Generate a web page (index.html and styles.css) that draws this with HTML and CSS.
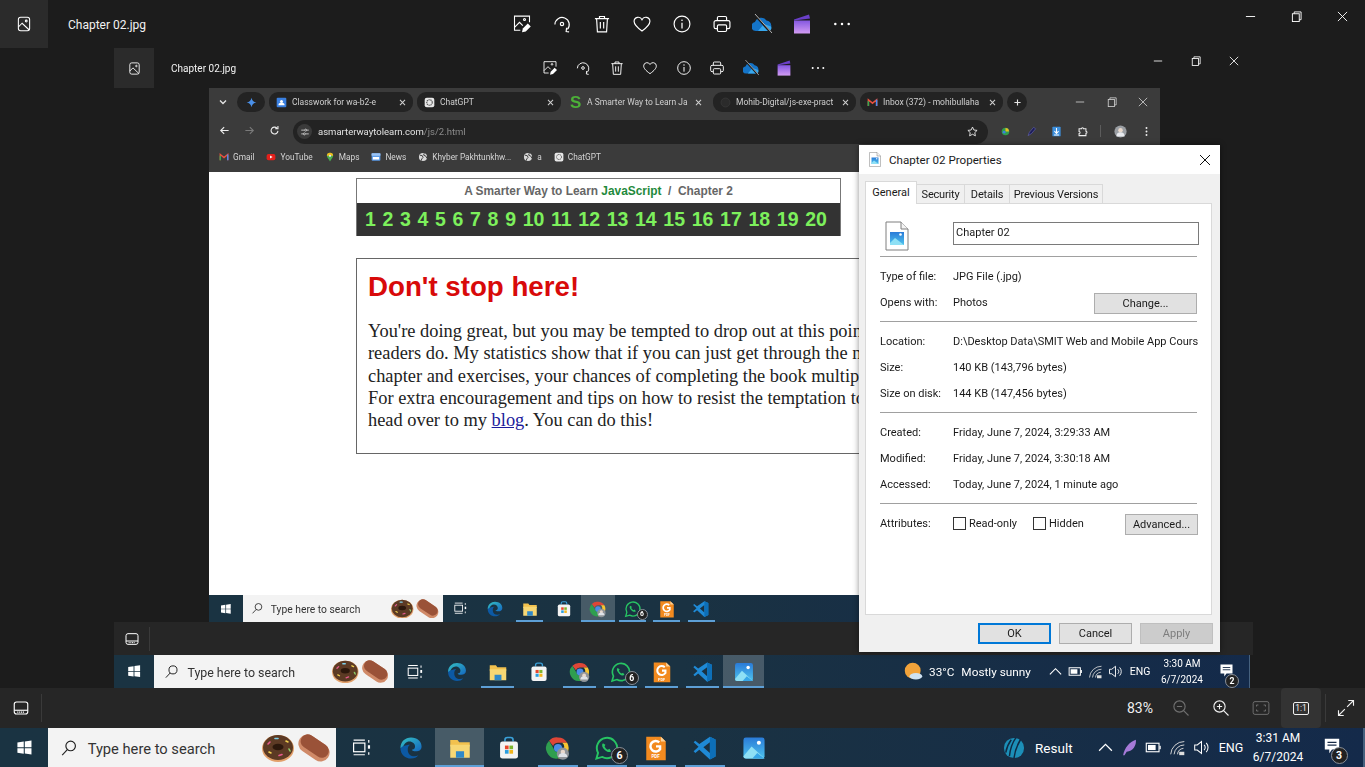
FILE: index.html
```html
<!DOCTYPE html>
<html>
<head>
	<meta charset="UTF-8">
	<title>Chapter 02.jpg</title>
	<link rel="stylesheet" href="styles.css">
</head>
<body>
	<svg class="sprite" xmlns="http://www.w3.org/2000/svg">
		<defs>
			<linearGradient id="g-clap" x1="0" y1="0" x2="0" y2="1"><stop offset="0" stop-color="#8457e0"/><stop offset="1" stop-color="#d29cf2"/></linearGradient>
			<linearGradient id="g-edge" x1="0" y1="0" x2="1" y2="1"><stop offset="0" stop-color="#35c1c4"/><stop offset="1" stop-color="#1467c0"/></linearGradient>
			<linearGradient id="g-photos" x1="0" y1="0" x2="0" y2="1"><stop offset="0" stop-color="#2a7bd8"/><stop offset="1" stop-color="#4ec3ee"/></linearGradient>
		</defs>
		<symbol id="i-tile" viewBox="0 0 24 24"><g fill="none" stroke="currentColor" stroke-width="1.4"><rect x="4.5" y="3" width="15" height="18" rx="3"/><path d="M4.5 16l5-5 9.5 9"/><circle cx="15" cy="8" r="1.2"/></g></symbol>
		<symbol id="i-edit" viewBox="0 0 24 24"><g fill="none" stroke="currentColor" stroke-width="1.3"><path d="M21 10V2.5H3v17h7"/><path d="M3 16l6-6 4 4"/><circle cx="15" cy="6.5" r="1.2"/></g><path d="M12 22l1-4.5 6-6 3.5 3.5-6 6z" fill="currentColor"/></symbol>
		<symbol id="i-rotate" viewBox="0 0 24 24"><g fill="none" stroke="currentColor" stroke-width="1.4"><path d="M3.5 12.5A8.600 8.600 0 1 1 18.500 18.500"/><path d="M17.500 16.500l-.5 4.500 3.500.5"/><circle cx="12" cy="12" r="2"/></g></symbol>
		<symbol id="i-trash" viewBox="0 0 24 24"><path d="M3.5 5.500h17M9 5.500V3h6v2.500M5.500 5.500l1 16h11l1-16M10 9.500v8M14 9.500v8" fill="none" stroke="currentColor" stroke-width="1.4"/></symbol>
		<symbol id="i-heart" viewBox="0 0 24 24"><path d="M12 20.500C5 15.500 2.500 12 2.500 8.800A5 5 0 0 1 12 6.800a5 5 0 0 1 9.500 2c0 3.200-2.500 6.700-9.500 11.700z" fill="none" stroke="currentColor" stroke-width="1.4"/></symbol>
		<symbol id="i-info" viewBox="0 0 24 24"><circle cx="12" cy="12" r="9.500" fill="none" stroke="currentColor" stroke-width="1.4"/><path d="M12 10.500v7" stroke="currentColor" stroke-width="1.5"/><circle cx="12" cy="7.500" r="1" fill="currentColor"/></symbol>
		<symbol id="i-print" viewBox="0 0 24 24"><g fill="none" stroke="currentColor" stroke-width="1.4"><path d="M6.500 8V4.500a1.500 1.500 0 0 1 1.500-1.500h8a1.500 1.500 0 0 1 1.500 1.500V8"/><path d="M6 17.500H4.500A2 2 0 0 1 2.500 15.500V10A2 2 0 0 1 4.500 8h15a2 2 0 0 1 2 2v5.500a2 2 0 0 1-2 2H18"/><rect x="6.500" y="13" width="11" height="8" rx="1.500"/></g></symbol>
		<symbol id="i-cloud" viewBox="2 3 20 20"><path d="M6 20a4.500 4.500 0 0 1-1-8.900A6.500 6.500 0 0 1 16.500 9.500 5.500 5.500 0 0 1 18 20z" fill="#1474c8"/><path d="M8 20l6-7 7 2.500a3 3 0 0 1-3 4.500z" fill="#38a8ee"/><path d="M4 3l18 20" stroke="#1c1c1c" stroke-width="2"/><path d="M5 3l17 19" stroke="#c4c4c4" stroke-width=".9"/></symbol>
		<symbol id="i-clap" viewBox="2 2.500 20 20"><path d="M4 8l15-5 1 4-16 2z" fill="#6a3fc8"/><rect x="4" y="9" width="16" height="13" fill="url(#g-clap)"/></symbol>
		<symbol id="i-dots" viewBox="0 0 24 24"><g fill="currentColor"><circle cx="4" cy="12" r="1.500"/><circle cx="12" cy="12" r="1.500"/><circle cx="20" cy="12" r="1.500"/></g></symbol>
		<symbol id="i-min" viewBox="0 0 12 12"><path d="M1 6h10" stroke="currentColor" stroke-width="1"/></symbol>
		<symbol id="i-restore" viewBox="0 0 12 12"><g fill="none" stroke="currentColor" stroke-width="1"><rect x="1.500" y="3" width="7.500" height="8.500"/><path d="M3.500 3V1h7.500v8.500H9"/></g></symbol>
		<symbol id="i-close" viewBox="0 0 12 12"><path d="M1 1l10 10M11 1L1 11" stroke="currentColor" stroke-width="1"/></symbol>
		<symbol id="i-tablet" viewBox="0 0 24 24"><g fill="none" stroke="currentColor" stroke-width="1.500"><rect x="3" y="4" width="18" height="16" rx="3"/><path d="M3 15h18"/><path d="M7 17.500h10" stroke-dasharray="1.500 1"/></g></symbol>
		<symbol id="i-zoomout" viewBox="0 0 24 24"><g fill="none" stroke="currentColor" stroke-width="1.500"><circle cx="10" cy="10" r="7.500"/><path d="M15.500 15.500l6.500 6.500M6.500 10h7"/></g></symbol>
		<symbol id="i-zoomin" viewBox="0 0 24 24"><g fill="none" stroke="currentColor" stroke-width="1.500"><circle cx="10" cy="10" r="7.500"/><path d="M15.500 15.500l6.500 6.500M6.500 10h7M10 6.500v7"/></g></symbol>
		<symbol id="i-fit" viewBox="0 0 24 24"><g fill="none" stroke="currentColor" stroke-width="1.300"><rect x="1.500" y="3.500" width="21" height="17" rx="2.500"/><path d="M6 10V8h2.500M15.500 8H18v2M18 14v2h-2.500M8.500 16H6v-2"/></g></symbol>
		<symbol id="i-expand" viewBox="0 0 24 24"><path d="M13.500 10.500L22 2M15 2h7v7M10.500 13.500L2 22M2 15v7h7" fill="none" stroke="currentColor" stroke-width="1.500"/></symbol>

		<symbol id="i-win" viewBox="0 0 24 24"><path d="M2 5l9-1.300v8H2zM12.500 3.500L22 2v9.700h-9.500zM2 13h9v8L2 19.700zM12.500 13H22v9l-9.500-1.300z" fill="#fff"/></symbol>
		<symbol id="i-search" viewBox="0 0 24 24"><g fill="none" stroke="#222" stroke-width="1.600"><circle cx="14.500" cy="9.500" r="6.500"/><path d="M10 14.500L3 22"/></g></symbol>
		<symbol id="i-doodle" viewBox="0 0 70 28"><ellipse cx="16" cy="14.500" rx="16" ry="13.500" fill="#e2a06a"/><ellipse cx="16" cy="13.500" rx="15" ry="12.500" fill="#5c3a24"/><ellipse cx="16" cy="13" rx="5.500" ry="3.200" fill="#2c180c"/><g stroke-width="1.600" stroke-linecap="round"><path d="M6 10l2-2" stroke="#e85a8e"/><path d="M13 4.500h3" stroke="#7ed0e8"/><path d="M24 7l2 1" stroke="#f0d050"/><path d="M27 15l1 2" stroke="#8fd06a"/><path d="M7 18l2 1" stroke="#f0d050"/><path d="M17 21.500l3-1" stroke="#e85a8e"/></g><rect x="35" y="5" width="34" height="18" rx="9" transform="rotate(34 52 14)" fill="#d08a68"/><rect x="36" y="5" width="31" height="14" rx="7" transform="rotate(34 52 14)" fill="#9a5238"/></symbol>
		<symbol id="i-taskview" viewBox="0 0 24 24"><g fill="none" stroke="#fff" stroke-width="1.400"><rect x="3" y="7" width="13" height="10"/><path d="M3 3.500h13M3 20.500h13M20.500 3.500v3M20.500 17.500v3"/></g><rect x="19.500" y="9.500" width="2.500" height="4" fill="#fff"/></symbol>
		<symbol id="i-edge" viewBox="0 0 32 32"><path d="M3 16C3 8 9 3 16 3c8 0 13 5 13 11 0 4-3 6-7 6-3 0-5-1-5-2 2 0 4-1 4-4s-3-6-7-6-7 3-8 8z" fill="url(#g-edge)"/><path d="M3 16c0 8 6 13 13 13 4 0 7-1 9-4-6 3-13 0-13-7 0-3 1-5 3-6-6 0-11 3-12 4z" fill="#0c59a4"/></symbol>
		<symbol id="i-files" viewBox="0 0 32 32"><path d="M4 6h9l2 3h13v5H4z" fill="#f2c14e"/><rect x="4" y="12" width="24" height="16" fill="#f7d774"/><rect x="11" y="20" width="10" height="8" fill="#2f88c8"/></symbol>
		<symbol id="i-store" viewBox="0 0 32 32"><path d="M11 8V6a3 3 0 0 1 3-3h4a3 3 0 0 1 3 3v2" fill="none" stroke="#3aa0d8" stroke-width="2"/><rect x="5" y="8" width="22" height="21" rx="3" fill="#f4f4f4"/><rect x="11" y="13" width="4.500" height="4.500" fill="#e8472b"/><rect x="16.500" y="13" width="4.500" height="4.500" fill="#7db62e"/><rect x="11" y="18.500" width="4.500" height="4.500" fill="#2a9ee0"/><rect x="16.500" y="18.500" width="4.500" height="4.500" fill="#f3b51b"/></symbol>
		<symbol id="i-chrome" viewBox="0 0 32 32"><path d="M16 3a13 13 0 0 1 11.300 6.500H16A6.500 6.500 0 0 0 10 13.500L5 7A13 13 0 0 1 16 3z" fill="#de4637"/><path d="M27.300 9.500A13 13 0 0 1 16 29l5.500-9.500a6.500 6.500 0 0 0-.3-10z" fill="#f7c531"/><path d="M5 7l5.500 9.500A6.500 6.500 0 0 0 21.500 19.500L16 29A13 13 0 0 1 5 7z" fill="#2f9e4f"/><circle cx="16" cy="16" r="5" fill="#4a8de8"/><circle cx="22" cy="23" r="7.500" fill="#8f9499"/><circle cx="22" cy="21" r="2.800" fill="#e8d8cc"/><path d="M16.500 27a5.500 5 0 0 1 11 0z" fill="#dfe3e8"/></symbol>
		<symbol id="i-whatsapp" viewBox="0 0 32 32"><path d="M3 29l2-7A12.500 12.500 0 1 1 10 27z" fill="none" stroke="#27c463" stroke-width="2.400"/><path d="M11 10c-2 2-1 5 2 8s6 4 8 2l-2-3-2 1c-2-1-3-2-4-4l1-2z" fill="#27c463"/></symbol>
		<symbol id="i-foxit" viewBox="0 0 32 32"><path d="M4 2h18l6 6v23H4z" fill="#f28a1f"/><path d="M22 2l6 6h-6z" fill="#fbd29a"/><path d="M20 9a6.500 6.500 0 1 0 1 8.500v-3.500h-5" fill="none" stroke="#fff" stroke-width="3"/></symbol>
		<symbol id="i-vscode" viewBox="0 0 32 32"><path d="M22 2l7 3.500v21L22 30 9 18l-5 4-2-2 6-5.500L2 9l2-2 5 4zM22 9l-8 6 8 7z" fill="#1f8ad6"/><path d="M22 2l7 3.500v21L22 30z" fill="#0d6fb8"/></symbol>
		<symbol id="i-photos" viewBox="0 0 32 32"><rect x="3" y="3" width="26" height="26" rx="3" fill="url(#g-photos)"/><circle cx="22" cy="9.500" r="2.500" fill="#fff"/><path d="M3 26l10-12 16 15H6a3 3 0 0 1-3-3z" fill="#8ee0f5"/><path d="M14 29l6-7 9 7z" fill="#37a7e8"/></symbol>

		<symbol id="i-chevup" viewBox="0 0 16 16"><path d="M2 11l6-6 6 6" fill="none" stroke="#fff" stroke-width="1.200"/></symbol>
		<symbol id="i-battery" viewBox="0 0 20 16"><rect x="1.500" y="3" width="15" height="10" fill="none" stroke="#fff" stroke-width="1.300"/><rect x="3.500" y="5" width="9" height="6" fill="#fff"/><rect x="17" y="6" width="1.500" height="4" fill="#fff"/></symbol>
		<symbol id="i-wifi" viewBox="0 0 20 20"><g fill="none" stroke="#ddd" stroke-width="1.100"><path d="M2 18A16 16 0 0 1 18 3"/><path d="M6 18A12 12 0 0 1 18 7"/><path d="M10 18a8 8 0 0 1 7-7"/></g><path d="M12 15h6v4h-6z" fill="#ddd"/></symbol>
		<symbol id="i-speaker" viewBox="0 0 20 20"><g fill="none" stroke="#fff" stroke-width="1.200"><path d="M2 7h3l5-4v14l-5-4H2z"/><path d="M13 7a4 4 0 0 1 0 6M15.500 4.500a8 8 0 0 1 0 11"/></g></symbol>
		<symbol id="i-note" viewBox="0 0 20 20"><path d="M2 2h16v12h-8l-3 4v-4H2z" fill="#fff"/><path d="M5 6h10M5 9h10" stroke="#1a2c48" stroke-width="1.200"/></symbol>
		<symbol id="i-sun" viewBox="0 0 24 24"><circle cx="11" cy="11" r="10" fill="#f2a33a"/><ellipse cx="15" cy="18" rx="8" ry="4" fill="#cfe2f3"/></symbol>
		<symbol id="i-result" viewBox="0 0 24 24"><circle cx="12" cy="12" r="11" fill="#1c8fb8"/><path d="M7 21C8 12 11 5 14 1M12 23c1-8 4-15 7-20M3 17c1-6 3-10 6-14" stroke="#0f2a44" stroke-width="1.600" fill="none"/></symbol>
		<symbol id="i-feather" viewBox="0 0 24 24"><path d="M3 23C5 12 12 4 21 1c1 8-4 16-13 17l-3 5z" fill="#a67ad8"/></symbol>

		<symbol id="i-gpt" viewBox="0 0 16 16"><rect x="1" y="1" width="14" height="14" rx="3" fill="#e8e8e8"/><circle cx="8" cy="8" r="4" fill="none" stroke="#555" stroke-width="1.600" stroke-dasharray="2 .8"/></symbol>
		<symbol id="i-classroom" viewBox="0 0 16 16"><rect x="1" y="1" width="14" height="14" rx="1.500" fill="#3a7fe0"/><circle cx="8" cy="6.500" r="2.200" fill="#fff"/><path d="M3.500 12a4.500 3.500 0 0 1 9 0z" fill="#fff"/></symbol>
		<symbol id="i-gemini" viewBox="0 0 16 16"><path d="M8 1c.6 4 3 6.400 7 7-4 .6-6.400 3-7 7-.6-4-3-6.400-7-7 4-.6 6.400-3 7-7z" fill="#4a90e8"/></symbol>
		<symbol id="i-gmail" viewBox="0 0 16 16"><path d="M2 13V4l6 5 6-5v9" fill="none" stroke="#e8503f" stroke-width="2.200"/><path d="M14 4v9" stroke="#4c8bf0" stroke-width="2.200"/><path d="M2 13V6" stroke="#34a853" stroke-width="2.200"/></symbol>
		<symbol id="i-github" viewBox="0 0 16 16"><circle cx="8" cy="8" r="6.500" fill="#2b2b2b" stroke="#3a3a3a"/></symbol>
		<symbol id="i-youtube" viewBox="0 0 16 16"><rect x="1" y="3" width="14" height="10" rx="3" fill="#e3201b"/><path d="M6.500 5.500v5l4-2.500z" fill="#fff"/></symbol>
		<symbol id="i-maps" viewBox="0 0 16 16"><path d="M8 1a5 5 0 0 1 5 5c0 3-3 5-5 9-2-4-5-6-5-9a5 5 0 0 1 5-5z" fill="#4caf50"/><path d="M8 1a5 5 0 0 1 5 5H3a5 5 0 0 1 5-5z" fill="#f2b91d"/><circle cx="8" cy="6" r="1.800" fill="#e8e8e8"/></symbol>
		<symbol id="i-news" viewBox="0 0 16 16"><rect x="1" y="2" width="14" height="12" rx="1.500" fill="#5b9be8"/><rect x="1" y="2" width="14" height="4" fill="#9cc3f2"/><rect x="3" y="8" width="10" height="4" fill="#fff"/></symbol>
		<symbol id="i-globe" viewBox="0 0 16 16"><circle cx="8" cy="8" r="6.500" fill="#d8d8d8"/><path d="M3 5l4 1 1 3-2 2-1 3M10 2l-1 3 4 2 1 3" fill="none" stroke="#3a3a3a" stroke-width="1.500"/></symbol>
		<symbol id="i-ext1" viewBox="0 0 16 16"><circle cx="8" cy="8" r="5.500" fill="#2f9e4f"/><path d="M8 3a5 5 0 0 1 5 5H8z" fill="#e8c020"/><circle cx="6" cy="9" r="2" fill="#3a7fe0"/></symbol>
		<symbol id="i-ext2" viewBox="0 0 16 16"><path d="M3 14l2-5 6-7 3 2-6 7z" fill="#1c1c58" stroke="#6a6ac0" stroke-width=".8"/></symbol>
		<symbol id="i-ext3" viewBox="0 0 16 16"><rect x="2" y="1" width="12" height="14" rx="1" fill="#3d8fdc"/><path d="M8 3v7M5 7.500l3 3.500 3-3.500M4.500 13h7" fill="none" stroke="#fff" stroke-width="1.500"/></symbol>
		<symbol id="i-puzzle" viewBox="0 0 16 16"><path d="M3 4h3.500a1.500 1.500 0 0 1 3 0H13v3.500a1.500 1.500 0 0 1 0 3V14H3v-3a1.500 1.500 0 0 0 0-3z" fill="none" stroke="#eee" stroke-width="1.500"/></symbol>
		<symbol id="i-avatar" viewBox="0 0 16 16"><circle cx="8" cy="8" r="7.500" fill="#9a9ea3"/><circle cx="8" cy="6.500" r="2.800" fill="#e8d8cc"/><path d="M3 14a5 5 0 0 1 10 0z" fill="#e8eaee"/></symbol>
		<symbol id="i-star" viewBox="0 0 16 16"><path d="M8 1.500l2 4.300 4.700.6-3.400 3.200.9 4.700L8 12l-4.200 2.300.9-4.700L1.300 6.400 6 5.800z" fill="none" stroke="#eee" stroke-width="1.300"/></symbol>
		<symbol id="i-tune" viewBox="0 0 16 16"><g stroke="#ddd" stroke-width="1.300" fill="none"><path d="M2 5h5M11 5h3M2 11h3M9 11h5"/><circle cx="9" cy="5" r="1.600"/><circle cx="7" cy="11" r="1.600"/></g></symbol>
		<symbol id="i-back" viewBox="0 0 16 16"><path d="M14 8H2.500M7.500 3L2.500 8l5 5" fill="none" stroke="currentColor" stroke-width="1.600"/></symbol>
		<symbol id="i-forward" viewBox="0 0 16 16"><path d="M2 8h11.500M8.500 3l5 5-5 5" fill="none" stroke="currentColor" stroke-width="1.600"/></symbol>
		<symbol id="i-reload" viewBox="0 0 16 16"><path d="M13 8.500A5 5 0 1 1 11.500 4.500M13 1.500v4H9" fill="none" stroke="currentColor" stroke-width="1.600"/></symbol>
		<symbol id="i-kebab" viewBox="0 0 16 16"><g fill="currentColor"><circle cx="8" cy="3" r="1.400"/><circle cx="8" cy="8" r="1.400"/><circle cx="8" cy="13" r="1.400"/></g></symbol>
		<symbol id="i-chevdown" viewBox="0 0 16 16"><path d="M4 6l4 4 4-4" fill="none" stroke="currentColor" stroke-width="1.800"/></symbol>
		<symbol id="i-x" viewBox="0 0 16 16"><path d="M3.500 3.500l9 9M12.500 3.500l-9 9" stroke="currentColor" stroke-width="1.800"/></symbol>
		<symbol id="i-plus" viewBox="0 0 16 16"><path d="M8 2.500v11M2.500 8h11" stroke="currentColor" stroke-width="2"/></symbol>
		<symbol id="i-file" viewBox="0 0 24 30"><path d="M1 1h15l7 7v21H1z" fill="#fff" stroke="#7f7f7f"/><path d="M16 1v7h7" fill="#f4f4f4" stroke="#7f7f7f"/><rect x="5" y="11" width="14" height="13" fill="url(#g-photos)"/><path d="M5 22l5-5 9 7H5z" fill="#8ee0f5"/><circle cx="15.500" cy="13.500" r="1.300" fill="#fff"/></symbol>
	</svg>

	<header class="top-bar">
		<div class="tile"><svg class="ico"><use href="#i-tile"/></svg></div>
		<div class="file-name">Chapter 02.jpg</div>
		<div class="tools">
			<span class="tool"><svg class="ico"><use href="#i-edit"/></svg></span>
			<span class="tool"><svg class="ico"><use href="#i-rotate"/></svg></span>
			<span class="tool"><svg class="ico"><use href="#i-trash"/></svg></span>
			<span class="tool"><svg class="ico"><use href="#i-heart"/></svg></span>
			<span class="tool"><svg class="ico"><use href="#i-info"/></svg></span>
			<span class="tool"><svg class="ico"><use href="#i-print"/></svg></span>
			<span class="tool"><svg class="ico"><use href="#i-cloud"/></svg></span>
			<span class="tool"><svg class="ico"><use href="#i-clap"/></svg></span>
			<span class="tool"><svg class="ico"><use href="#i-dots"/></svg></span>
		</div>
		<div class="win-btns">
			<span class="win-btn"><svg class="win-ico"><use href="#i-min"/></svg></span>
			<span class="win-btn"><svg class="win-ico"><use href="#i-restore"/></svg></span>
			<span class="win-btn"><svg class="win-ico"><use href="#i-close"/></svg></span>
		</div>
	</header>

	<main class="stage">
		<div class="inner">
			<header class="top-bar">
				<div class="tile"><svg class="ico"><use href="#i-tile"/></svg></div>
				<div class="file-name">Chapter 02.jpg</div>
				<div class="tools">
					<span class="tool"><svg class="ico"><use href="#i-edit"/></svg></span>
					<span class="tool"><svg class="ico"><use href="#i-rotate"/></svg></span>
					<span class="tool"><svg class="ico"><use href="#i-trash"/></svg></span>
					<span class="tool"><svg class="ico"><use href="#i-heart"/></svg></span>
					<span class="tool"><svg class="ico"><use href="#i-info"/></svg></span>
					<span class="tool"><svg class="ico"><use href="#i-print"/></svg></span>
					<span class="tool"><svg class="ico"><use href="#i-cloud"/></svg></span>
					<span class="tool"><svg class="ico"><use href="#i-clap"/></svg></span>
					<span class="tool"><svg class="ico"><use href="#i-dots"/></svg></span>
				</div>
				<div class="win-btns">
					<span class="win-btn"><svg class="win-ico"><use href="#i-min"/></svg></span>
					<span class="win-btn"><svg class="win-ico"><use href="#i-restore"/></svg></span>
					<span class="win-btn"><svg class="win-ico"><use href="#i-close"/></svg></span>
				</div>
			</header>

			<div class="browser">
				<div class="tab-strip">
					<svg class="strip-ico tab-chev"><use href="#i-chevdown"/></svg>
					<span class="gem-pill"><svg class="fav"><use href="#i-gemini"/></svg></span>
					<div class="tab pill t1"><svg class="fav"><use href="#i-classroom"/></svg><span class="tab-text">Classwork for wa-b2-e</span><svg class="tab-x"><use href="#i-x"/></svg></div>
					<div class="tab pill t2"><svg class="fav"><use href="#i-gpt"/></svg><span class="tab-text">ChatGPT</span><svg class="tab-x"><use href="#i-x"/></svg></div>
					<div class="tab t3"><span class="fav-s">S</span><span class="tab-text">A Smarter Way to Learn Ja</span><svg class="tab-x"><use href="#i-x"/></svg></div>
					<div class="tab pill t4"><svg class="fav"><use href="#i-github"/></svg><span class="tab-text">Mohib-Digital/js-exe-pract</span><svg class="tab-x"><use href="#i-x"/></svg></div>
					<div class="tab pill t5"><svg class="fav"><use href="#i-gmail"/></svg><span class="tab-text">Inbox (372) - mohibullaha</span><svg class="tab-x"><use href="#i-x"/></svg></div>
					<span class="new-tab"><svg class="strip-ico"><use href="#i-plus"/></svg></span>
					<div class="chrome-btns">
						<svg class="win-ico"><use href="#i-min"/></svg>
						<svg class="win-ico"><use href="#i-restore"/></svg>
						<svg class="win-ico"><use href="#i-close"/></svg>
					</div>
				</div>
				<div class="nav-bar">
					<span class="nav-btn"><svg class="strip-ico"><use href="#i-back"/></svg></span>
					<span class="nav-btn dim"><svg class="strip-ico"><use href="#i-forward"/></svg></span>
					<span class="nav-btn"><svg class="strip-ico"><use href="#i-reload"/></svg></span>
					<div class="omnibox">
						<span class="tune"><svg class="fav"><use href="#i-tune"/></svg></span>
						<span class="url">asmarterwaytolearn.com<span class="url-dim">/js/2.html</span></span>
						<svg class="fav star"><use href="#i-star"/></svg>
					</div>
					<div class="ext-row">
						<svg class="fav"><use href="#i-ext1"/></svg>
						<svg class="fav"><use href="#i-ext2"/></svg>
						<svg class="fav"><use href="#i-ext3"/></svg>
						<svg class="fav"><use href="#i-puzzle"/></svg>
						<span class="ext-sep"></span>
						<svg class="fav avatar"><use href="#i-avatar"/></svg>
						<svg class="fav kebab"><use href="#i-kebab"/></svg>
					</div>
				</div>
				<div class="bookmarks">
					<span class="bm"><svg class="fav"><use href="#i-gmail"/></svg>Gmail</span>
					<span class="bm"><svg class="fav"><use href="#i-youtube"/></svg>YouTube</span>
					<span class="bm"><svg class="fav"><use href="#i-maps"/></svg>Maps</span>
					<span class="bm"><svg class="fav"><use href="#i-news"/></svg>News</span>
					<span class="bm"><svg class="fav"><use href="#i-globe"/></svg>Khyber Pakhtunkhw...</span>
					<span class="bm"><svg class="fav"><use href="#i-globe"/></svg>a</span>
					<span class="bm"><svg class="fav"><use href="#i-gpt"/></svg>ChatGPT</span>
				</div>
				<div class="page">
					<div class="chapter-nav">
						<div class="chapter-title">A Smarter Way to Learn <span class="js">JavaScript</span>&nbsp; / &nbsp;Chapter 2</div>
						<div class="chapter-nums">
							<span>1</span><span>2</span><span>3</span><span>4</span><span>5</span><span>6</span><span>7</span><span>8</span><span>9</span><span>10</span><span>11</span><span>12</span><span>13</span><span>14</span><span>15</span><span>16</span><span>17</span><span>18</span><span>19</span><span>20</span>
						</div>
					</div>
					<div class="callout">
						<h1>Don't stop here!</h1>
						<p>You're doing great, but you may be tempted to drop out at this point<br>
						readers do. My statistics show that if you can just get through the n<br>
						chapter and exercises, your chances of completing the book multiply<br>
						For extra encouragement and tips on how to resist the temptation to<br>
						head over to my <a href="#">blog</a>. You can do this!</p>
					</div>
				</div>
				<div class="taskbar tb-sm">
					<span class="start"><svg class="start-ico"><use href="#i-win"/></svg></span>
					<div class="search"><svg class="search-ico"><use href="#i-search"/></svg><span class="search-text">Type here to search</span><svg class="doodle"><use href="#i-doodle"/></svg></div>
					<span class="cell first"><svg class="app tv"><use href="#i-taskview"/></svg></span>
					<span class="cell"><svg class="app"><use href="#i-edge"/></svg></span>
					<span class="cell run"><svg class="app"><use href="#i-files"/></svg></span>
					<span class="cell"><svg class="app"><use href="#i-store"/></svg></span>
					<span class="cell run active"><svg class="app"><use href="#i-chrome"/></svg></span>
					<span class="cell run"><svg class="app"><use href="#i-whatsapp"/></svg><b class="badge">6</b></span>
					<span class="cell run"><svg class="app"><use href="#i-foxit"/></svg><b class="pdf">PDF</b></span>
					<span class="cell run"><svg class="app"><use href="#i-vscode"/></svg></span>
				</div>
			</div>

			<div class="bottom-bar">
				<span class="tablet"><svg class="ico"><use href="#i-tablet"/></svg></span>
			</div>

			<div class="taskbar tb-md">
				<span class="start"><svg class="start-ico"><use href="#i-win"/></svg></span>
				<div class="search"><svg class="search-ico"><use href="#i-search"/></svg><span class="search-text">Type here to search</span><svg class="doodle"><use href="#i-doodle"/></svg></div>
				<span class="cell first"><svg class="app tv"><use href="#i-taskview"/></svg></span>
				<span class="cell"><svg class="app"><use href="#i-edge"/></svg></span>
				<span class="cell run"><svg class="app"><use href="#i-files"/></svg></span>
				<span class="cell"><svg class="app"><use href="#i-store"/></svg></span>
				<span class="cell run"><svg class="app"><use href="#i-chrome"/></svg></span>
				<span class="cell run"><svg class="app"><use href="#i-whatsapp"/></svg><b class="badge">6</b></span>
				<span class="cell run"><svg class="app"><use href="#i-foxit"/></svg><b class="pdf">PDF</b></span>
				<span class="cell run"><svg class="app"><use href="#i-vscode"/></svg></span>
				<span class="cell run active"><svg class="app"><use href="#i-photos"/></svg></span>
				<div class="tray">
					<svg class="tray-news"><use href="#i-sun"/></svg>
					<span class="tray-label"><span class="temp">33°C</span>Mostly sunny</span>
					<span class="tray-cell"><svg class="tray-ico"><use href="#i-chevup"/></svg></span>
					<span class="tray-cell"><svg class="tray-ico"><use href="#i-battery"/></svg></span>
					<span class="tray-cell"><svg class="tray-ico"><use href="#i-wifi"/></svg></span>
					<span class="tray-cell"><svg class="tray-ico"><use href="#i-speaker"/></svg></span>
					<span class="tray-lang">ENG</span>
					<span class="clock">3:30 AM<br>6/7/2024</span>
					<span class="notif"><svg class="note"><use href="#i-note"/></svg><b class="badge">2</b></span>
				</div>
			</div>
		</div>
	</main>

	<div class="bottom-bar main-bottom">
		<span class="tablet"><svg class="ico"><use href="#i-tablet"/></svg></span>
		<span class="zoom-pct">83%</span>
		<span class="bb-btn dim"><svg class="ico"><use href="#i-zoomout"/></svg></span>
		<span class="bb-btn"><svg class="ico"><use href="#i-zoomin"/></svg></span>
		<span class="bb-btn dim"><svg class="ico"><use href="#i-fit"/></svg></span>
		<span class="bb-btn on"><span class="actual">1:1</span></span>
		<span class="bb-sep"></span>
		<span class="bb-btn last"><svg class="ico"><use href="#i-expand"/></svg></span>
	</div>

	<div class="taskbar tb-lg">
		<span class="start"><svg class="start-ico"><use href="#i-win"/></svg></span>
		<div class="search"><svg class="search-ico"><use href="#i-search"/></svg><span class="search-text">Type here to search</span><svg class="doodle"><use href="#i-doodle"/></svg></div>
		<span class="cell first"><svg class="app tv"><use href="#i-taskview"/></svg></span>
		<span class="cell"><svg class="app"><use href="#i-edge"/></svg></span>
		<span class="cell run active"><svg class="app"><use href="#i-files"/></svg></span>
		<span class="cell"><svg class="app"><use href="#i-store"/></svg></span>
		<span class="cell run"><svg class="app"><use href="#i-chrome"/></svg></span>
		<span class="cell run"><svg class="app"><use href="#i-whatsapp"/></svg><b class="badge">6</b></span>
		<span class="cell run"><svg class="app"><use href="#i-foxit"/></svg><b class="pdf">PDF</b></span>
		<span class="cell run"><svg class="app"><use href="#i-vscode"/></svg></span>
		<span class="cell"><svg class="app"><use href="#i-photos"/></svg></span>
		<div class="tray">
			<svg class="tray-news"><use href="#i-result"/></svg>
			<span class="tray-label">Result</span>
			<span class="tray-cell"><svg class="tray-ico"><use href="#i-chevup"/></svg></span>
			<span class="tray-cell"><svg class="tray-ico"><use href="#i-feather"/></svg></span>
			<span class="tray-cell"><svg class="tray-ico"><use href="#i-battery"/></svg></span>
			<span class="tray-cell"><svg class="tray-ico"><use href="#i-wifi"/></svg></span>
			<span class="tray-cell"><svg class="tray-ico"><use href="#i-speaker"/></svg></span>
			<span class="tray-lang">ENG</span>
			<span class="clock">3:31 AM<br>6/7/2024</span>
			<span class="notif"><svg class="note"><use href="#i-note"/></svg><b class="badge">3</b></span>
		</div>
	</div>

	<section class="props">
		<div class="props-title">
			<svg class="props-fav"><use href="#i-file"/></svg>
			<span class="props-name">Chapter 02 Properties</span>
			<svg class="props-close"><use href="#i-close"/></svg>
		</div>
		<div class="props-body">
			<div class="props-tabs">
				<span class="ptab current">General</span>
				<span class="ptab sec">Security</span>
				<span class="ptab det">Details</span>
				<span class="ptab prev">Previous Versions</span>
			</div>
			<div class="props-panel">
				<div class="head-row">
					<svg class="big-file"><use href="#i-file"/></svg>
					<div class="name-input">Chapter 02</div>
				</div>
				<hr class="sep">
				<div class="row"><span class="lbl">Type of file:</span><span class="val">JPG File (.jpg)</span></div>
				<div class="row"><span class="lbl">Opens with:</span><span class="val">Photos</span><span class="btn change">Change...</span></div>
				<hr class="sep">
				<div class="row"><span class="lbl">Location:</span><span class="val">D:\Desktop Data\SMIT Web and Mobile App Cours</span></div>
				<div class="row"><span class="lbl">Size:</span><span class="val">140 KB (143,796 bytes)</span></div>
				<div class="row"><span class="lbl">Size on disk:</span><span class="val">144 KB (147,456 bytes)</span></div>
				<hr class="sep">
				<div class="row"><span class="lbl">Created:</span><span class="val">Friday, June 7, 2024, 3:29:33 AM</span></div>
				<div class="row"><span class="lbl">Modified:</span><span class="val">Friday, June 7, 2024, 3:30:18 AM</span></div>
				<div class="row"><span class="lbl">Accessed:</span><span class="val">Today, June 7, 2024, 1 minute ago</span></div>
				<hr class="sep">
				<div class="row">
					<span class="lbl">Attributes:</span>
					<span class="check"><i class="box"></i>Read-only</span>
					<span class="check"><i class="box"></i>Hidden</span>
					<span class="btn advanced">Advanced...</span>
				</div>
			</div>
			<div class="props-actions">
				<span class="btn dlg default">OK</span>
				<span class="btn dlg">Cancel</span>
				<span class="btn dlg disabled">Apply</span>
			</div>
		</div>
	</section>
</body>
</html>
```

FILE: styles.css
```css
* {
	box-sizing: border-box;
}

html, body {
	margin: 0;
	padding: 0;
}

body {
	position: relative;
	width: 1365px;
	height: 767px;
	overflow: hidden;
	background-color: #1c1c1c;
	color: #fff;
	font-family: Roboto, "Liberation Sans", sans-serif;
}

svg {
	display: block;
	flex: none;
}

.sprite {
	position: absolute;
	width: 0;
	height: 0;
}

/* viewer header */
.top-bar {
	display: flex;
	align-items: center;
	height: 48px;
	color: #fff;
}

.tile {
	display: flex;
	align-items: center;
	justify-content: center;
	width: 48px;
	height: 48px;
	background-color: #2b2b2b;
}

.tile .ico {
	width: 18px;
	height: 18px;
}

.file-name {
	width: 454px;
	padding-top: 2px;
	padding-left: 20px;
	font-size: 12px;
	color: #f2f2f2;
}

.tools {
	display: flex;
}

.tool {
	display: flex;
	align-items: center;
	justify-content: center;
	width: 40px;
	height: 40px;
}

.tool .ico {
	width: 20px;
	height: 20px;
}

.win-btns {
	display: flex;
	margin-left: auto;
}

.win-btn {
	display: flex;
	align-items: center;
	justify-content: center;
	width: 46px;
	height: 32px;
	margin-top: -16px;
}

.win-ico {
	width: 11px;
	height: 11px;
}

.stage {
	height: 640px;
	padding-left: 114px;
}

.inner {
	width: 1139px;
	height: 640px;
	filter: blur(0.3px);
}

.inner .top-bar {
	height: 40px;
}

.inner .tile {
	width: 40px;
	height: 40px;
}

.inner .tile .ico {
	width: 15px;
	height: 15px;
}

.inner .file-name {
	width: 379px;
	padding-top: 0;
	padding-left: 17px;
	font-size: 10px;
}

.inner .tool {
	width: 33.5px;
	height: 40px;
}

.inner .tool .ico {
	width: 16px;
	height: 16px;
}

.inner .win-btn {
	width: 38px;
	height: 26px;
	margin-top: -14px;
}

.inner .win-ico {
	width: 10px;
	height: 10px;
}

/* browser shot */
.browser {
	display: flex;
	flex-direction: column;
	width: 951px;
	height: 534px;
	margin-left: 95px;
	background-color: #3b3b3b;
}

.tab-strip {
	display: flex;
	align-items: center;
	height: 28px;
	color: #e4e4e4;
}

.strip-ico {
	width: 12px;
	height: 12px;
}

.tab-chev {
	margin-left: 8px;
	margin-right: 8px;
}

.gem-pill {
	display: flex;
	align-items: center;
	justify-content: center;
	width: 28px;
	height: 20px;
	border-radius: 10px;
	background-color: #232323;
}

.fav {
	width: 11px;
	height: 11px;
}

.tab {
	display: flex;
	align-items: center;
	height: 20px;
	padding: 0 6px 0 7px;
	border-radius: 9px;
	font-size: 8.5px;
	color: #cfcfcf;
	white-space: nowrap;
}

.tab.pill {
	background-color: #232323;
}

.t1 {
	width: 144px;
	margin-left: 4px;
	margin-right: 4px;
}

.t2 {
	width: 144px;
}

.t3 {
	width: 148px;
	padding-left: 9px;
}

.t4 {
	width: 143px;
	margin-left: 4px;
	margin-right: 4px;
}

.t5 {
	width: 143px;
}

.tab-text {
	flex: 1;
	min-width: 0;
	margin-left: 5px;
	overflow: hidden;
}

.fav-s {
	width: 12px;
	font-family: "Liberation Sans", sans-serif;
	font-size: 17px;
	font-weight: 700;
	line-height: 17px;
	color: #4caf38;
}

.tab-x {
	width: 9px;
	height: 9px;
	margin-left: 3px;
	color: #d0d0d0;
}

.new-tab {
	display: flex;
	align-items: center;
	justify-content: center;
	width: 20px;
	height: 20px;
	margin-left: 4px;
	border-radius: 50%;
	background-color: #232323;
}

.new-tab .strip-ico {
	width: 9px;
	height: 9px;
}

.chrome-btns {
	display: flex;
	gap: 21.5px;
	margin-left: 48px;
	color: #cfcfcf;
}

.chrome-btns .win-ico {
	width: 10px;
	height: 10px;
}

.nav-bar {
	display: flex;
	align-items: center;
	height: 28px;
	padding-left: 3px;
	color: #eee;
}

.nav-btn {
	display: flex;
	align-items: center;
	justify-content: center;
	width: 25px;
}

.nav-btn .strip-ico {
	width: 11px;
	height: 11px;
}

.nav-btn.dim {
	color: #7a7a7a;
}

.omnibox {
	display: flex;
	align-items: center;
	width: 695px;
	height: 24px;
	margin-left: 6px;
	margin-top: 3px;
	padding-left: 4px;
	border-radius: 12px;
	background-color: #232323;
}

.tune {
	display: flex;
	align-items: center;
	justify-content: center;
	width: 15px;
	height: 15px;
	border-radius: 50%;
	background-color: #3a3a3a;
}

.tune .fav {
	width: 10px;
	height: 10px;
}

.url {
	margin-left: 6px;
	font-size: 9.5px;
	color: #e2e2e2;
}

.url-dim {
	color: #8a8a8a;
}

.star {
	margin-left: auto;
	margin-right: 10px;
}

.ext-row {
	display: flex;
	align-items: center;
	gap: 14.5px;
	margin-left: 12px;
	margin-top: 2px;
}

.ext-sep {
	width: 1px;
	height: 12px;
	margin: 0 -2px;
	background-color: #5c5c5c;
}

.avatar {
	width: 13px;
	height: 13px;
}

.kebab {
	color: #eee;
}

.bookmarks {
	display: flex;
	align-items: center;
	gap: 12px;
	height: 28px;
	padding-left: 10px;
	padding-bottom: 2px;
	font-size: 8.3px;
	color: #d4d4d4;
}

.bm {
	display: flex;
	align-items: center;
	gap: 4px;
	white-space: nowrap;
}

.bm .fav {
	width: 10px;
	height: 10px;
}

.page {
	position: relative;
	flex: 1;
	height: 423px;
	padding: 6px 0 0 147px;
	background-color: #fff;
	color: #222;
}

.chapter-nav {
	width: 485px;
	height: 58px;
	border: 1px solid #777;
	font-family: "Liberation Sans", sans-serif;
}

.chapter-title {
	height: 24px;
	font-size: 11.9px;
	font-weight: 700;
	line-height: 24px;
	text-align: center;
	color: #666;
}

.js {
	color: #1f8a3c;
}

.chapter-nums {
	display: flex;
	align-items: center;
	justify-content: space-between;
	height: 33px;
	padding: 0 13px 0 8px;
	background-color: #333;
	font-size: 19.5px;
	font-weight: 700;
	color: #7df05c;
}

.callout {
	width: 640px;
	height: 196px;
	margin-top: 22px;
	padding: 11px 11px 0;
	border: 1px solid #666;
}

.callout h1 {
	margin: 0;
	font-family: "Liberation Sans", sans-serif;
	font-size: 27.7px;
	font-weight: 700;
	line-height: 34px;
	color: #d80a0a;
}

.callout p {
	margin: 16px 0 0;
	font-family: "Liberation Serif", serif;
	font-size: 18.4px;
	line-height: 22.3px;
	white-space: nowrap;
	color: #222;
}

.callout a {
	color: #1c1c9c;
}

/* strip under the picture */
.bottom-bar {
	display: flex;
	align-items: center;
	height: 33px;
	background-color: #262626;
}

.tablet {
	display: flex;
	align-items: center;
	justify-content: center;
	width: 36px;
	height: 24px;
	border-right: 1px solid #3a3a3a;
}

.tablet .ico {
	width: 16px;
	height: 16px;
}

.main-bottom {
	height: 40px;
}

.main-bottom .tablet {
	width: 42px;
	height: 28px;
}

.main-bottom .tablet .ico {
	width: 18px;
	height: 18px;
}

.zoom-pct {
	margin-left: auto;
	width: 34px;
	font-size: 14px;
	color: #f0f0f0;
}

.bb-btn {
	display: flex;
	align-items: center;
	justify-content: center;
	width: 40px;
	height: 40px;
	color: #f0f0f0;
}

.bb-btn .ico {
	width: 18px;
	height: 18px;
}

.bb-btn.dim {
	color: #6f6f6f;
}

.bb-btn.on {
	border-radius: 4px;
	background-color: #333;
}

.bb-btn.last {
	margin-right: -1px;
}

.actual {
	display: flex;
	align-items: center;
	justify-content: center;
	width: 16px;
	height: 13px;
	border: 1px solid #f0f0f0;
	border-radius: 2px;
	font-size: 8.5px;
}

.bb-sep {
	width: 1px;
	height: 28px;
	margin-left: 4px;
	background-color: #3a3a3a;
}

/* windows taskbar, three sizes */
.taskbar {
	display: flex;
	align-items: stretch;
	height: var(--bar);
	background: linear-gradient(90deg, #1a3342 0%, #1a3242 50%, #142a4a 100%);
}

.tb-lg {
	--bar: 39px;
	--start: 48px;
	--search: 288px;
	--cell: 49px;
	--app: 26px;
	--font: 14.7px;
	--run: 40px;
	--badge: 17px;
	--doodle: 70px;
	border-right: 2px solid #46617e;
	box-shadow: inset -2px 0 0 #142a4a;
}

.tb-md {
	--bar: 33px;
	--start: 40px;
	--search: 240px;
	--cell: 41px;
	--app: 22px;
	--font: 12.4px;
	--run: 33px;
	--badge: 14px;
	--doodle: 58px;
	width: 1136px;
	border-right: 1px solid #46617e;
}

.tb-sm {
	--bar: 27px;
	--start: 34px;
	--search: 200px;
	--cell: 34.3px;
	--app: 18px;
	--font: 10.3px;
	--run: 27px;
	--badge: 11px;
	--doodle: 49px;
	flex: none;
}

.start {
	display: flex;
	align-items: center;
	justify-content: center;
	width: var(--start);
}

.start-ico {
	width: calc(var(--app) * 0.65);
	height: calc(var(--app) * 0.65);
}

.search {
	display: flex;
	align-items: center;
	width: var(--search);
	background-color: #f3f3f3;
	color: #333;
	font-size: var(--font);
}

.search-ico {
	width: calc(var(--font) * 1.2);
	height: calc(var(--font) * 1.2);
	margin-left: calc(var(--font) * 0.8);
}

.search-text {
	margin-top: 2px;
	margin-left: calc(var(--font) * 0.7);
	white-space: nowrap;
}

.doodle {
	width: var(--doodle);
	height: calc(var(--doodle) * 0.4);
	margin-left: auto;
	margin-right: calc(var(--font) * 0.3);
}

.cell {
	position: relative;
	display: flex;
	align-items: center;
	justify-content: center;
	width: var(--cell);
}

.cell.first {
	width: calc(var(--cell) + 1px);
}

.app {
	width: var(--app);
	height: var(--app);
}

.app.tv {
	width: calc(var(--app) * 0.8);
	height: calc(var(--app) * 0.8);
}

.cell.run::after {
	content: "";
	position: absolute;
	bottom: 0;
	left: 50%;
	width: var(--run);
	height: 2px;
	margin-left: calc(var(--run) / -2);
	background-color: #5d9fd6;
}

.cell.active {
	background-color: rgba(255, 255, 255, 0.2);
}

.cell.active::after {
	left: 0;
	width: 100%;
	margin-left: 0;
}

.badge {
	position: absolute;
	display: flex;
	align-items: center;
	justify-content: center;
	width: var(--badge);
	height: var(--badge);
	border: 1px solid #8a9099;
	border-radius: 50%;
	background-color: #222;
	font-size: calc(var(--badge) * 0.62);
	color: #fff;
}

.cell .badge {
	right: calc(50% - var(--app) * 0.83);
	bottom: calc(50% - var(--app) * 0.62);
}

.pdf {
	position: absolute;
	left: 0;
	right: 0;
	bottom: calc(50% - var(--app) * 0.46);
	font-size: calc(var(--app) * 0.17);
	text-align: center;
	color: #fff;
}

.tray {
	display: flex;
	align-items: center;
	margin-left: auto;
	font-size: calc(var(--font) * 0.93);
}

.tray-cell {
	display: flex;
	align-items: center;
	justify-content: center;
}

.tb-lg .tray-cell {
	width: 24px;
}

.tb-md .tray-cell {
	width: 20px;
}

.tray-ico {
	width: 17px;
	height: 17px;
}

.tb-md .tray-ico {
	width: 15px;
	height: 15px;
}

.tray-news {
	width: 22px;
	height: 22px;
}

.tb-md .tray-news {
	width: 19px;
	height: 19px;
}

.tray-label {
	white-space: nowrap;
}

.tb-lg .tray-label {
	width: 68px;
	padding-left: 10px;
	font-size: 13.5px;
}

.tb-md .tray-label {
	width: 122px;
	padding-left: 6px;
	font-size: 11.8px;
}

.temp {
	margin-right: 7px;
}

.tray-lang {
	text-align: center;
	font-size: 12.5px;
}

.tb-lg .tray-lang {
	width: 36px;
}

.tb-md .tray-lang {
	width: 30px;
	font-size: 10.5px;
}

.clock {
	text-align: center;
	white-space: nowrap;
}

.tb-lg .clock {
	width: 58px;
	font-size: 12px;
	line-height: 19px;
}

.tb-md .clock {
	width: 54px;
	font-size: 10px;
	line-height: 16px;
}

.notif {
	position: relative;
	display: flex;
	align-items: center;
	justify-content: center;
}

.tb-lg .notif {
	width: 49px;
	margin-right: 7px;
}

.tb-md .notif {
	width: 34px;
	margin-right: 6px;
}

.note {
	width: 18px;
	height: 18px;
	margin-top: -3px;
}

.tb-md .note {
	width: 15px;
	height: 15px;
}

.notif .badge {
	right: calc(50% - 16px);
	bottom: calc(50% - 16px);
}

.tb-md .notif .badge {
	right: calc(50% - 13px);
	bottom: calc(50% - 16px);
}

/* file properties dialog */
.props {
	position: absolute;
	left: 859px;
	top: 145px;
	display: flex;
	flex-direction: column;
	width: 361px;
	height: 507px;
	background-color: #f0f0f0;
	color: #1a1a1a;
	font-size: 11px;
	box-shadow: 0 0 6px rgba(0, 0, 0, 0.45);
}

.props-title {
	display: flex;
	align-items: center;
	height: 29px;
	padding-left: 10px;
	background-color: #fff;
	font-size: 11.6px;
}

.props-fav {
	width: 12px;
	height: 15px;
}

.props-name {
	margin-left: 8px;
}

.props-close {
	width: 12px;
	height: 12px;
	margin-left: auto;
	margin-right: 9px;
	color: #111;
}

.props-body {
	flex: 1;
	padding: 7px 8px 0 6px;
}

.props-tabs {
	display: flex;
	align-items: flex-end;
	height: 22px;
}

.ptab {
	display: flex;
	align-items: center;
	justify-content: center;
	height: 19px;
	border: 1px solid #d9d9d9;
	border-bottom: 0;
	border-left: 0;
	letter-spacing: -0.2px;
	white-space: nowrap;
}

.ptab.current {
	position: relative;
	z-index: 1;
	width: 52px;
	height: 23px;
	margin-bottom: -1px;
	padding-bottom: 2px;
	border-left: 1px solid #d9d9d9;
	background-color: #fff;
	letter-spacing: 0;
}

.ptab.sec {
	width: 48px;
}

.ptab.det {
	width: 45px;
}

.ptab.prev {
	width: 93px;
}

.props-panel {
	height: 412px;
	padding: 0 14px;
	border: 1px solid #d9d9d9;
	background-color: #fff;
}

.head-row {
	display: flex;
	align-items: center;
	height: 52px;
	padding-top: 6px;
}

.big-file {
	width: 24px;
	height: 30px;
	margin-left: 5px;
	margin-top: 6px;
}

.name-input {
	flex: 1;
	height: 23px;
	margin-left: 44px;
	margin-right: -2px;
	padding-left: 2px;
	border: 1px solid #7a7a7a;
	line-height: 19px;
}

.sep {
	height: 1px;
	margin: 0;
	border: 0;
	background-color: #a0a0a0;
}

.row {
	display: flex;
	align-items: center;
	height: 26px;
}

.sep + .row {
	margin-top: 6px;
}

.row + .sep {
	margin-top: 6px;
}

.lbl {
	flex: none;
	width: 73px;
}

.val {
	flex: 1;
	min-width: 0;
	margin-right: -2px;
	overflow: hidden;
	white-space: nowrap;
}

.btn {
	display: flex;
	align-items: center;
	justify-content: center;
	flex: none;
	height: 21px;
	border: 1px solid #adadad;
	background-color: #e1e1e1;
}

.row .btn {
	margin-top: 2px;
}

.change {
	width: 103px;
}

.advanced {
	width: 73px;
	margin-left: auto;
	margin-right: -1px;
}

.check {
	display: flex;
	align-items: center;
	gap: 3px;
	width: 80px;
}

.box {
	display: block;
	width: 13px;
	height: 13px;
	border: 1px solid #333;
	background-color: #fff;
}

.props-actions {
	display: flex;
	justify-content: flex-end;
	gap: 8px;
	margin-right: -1px;
	padding-top: 8px;
}

.dlg {
	width: 73px;
}

.dlg.default {
	border: 2px solid #0078d7;
}

.dlg.disabled {
	border-color: #bfbfbf;
	background-color: #ccc;
	color: #7d7d7d;
}
```
